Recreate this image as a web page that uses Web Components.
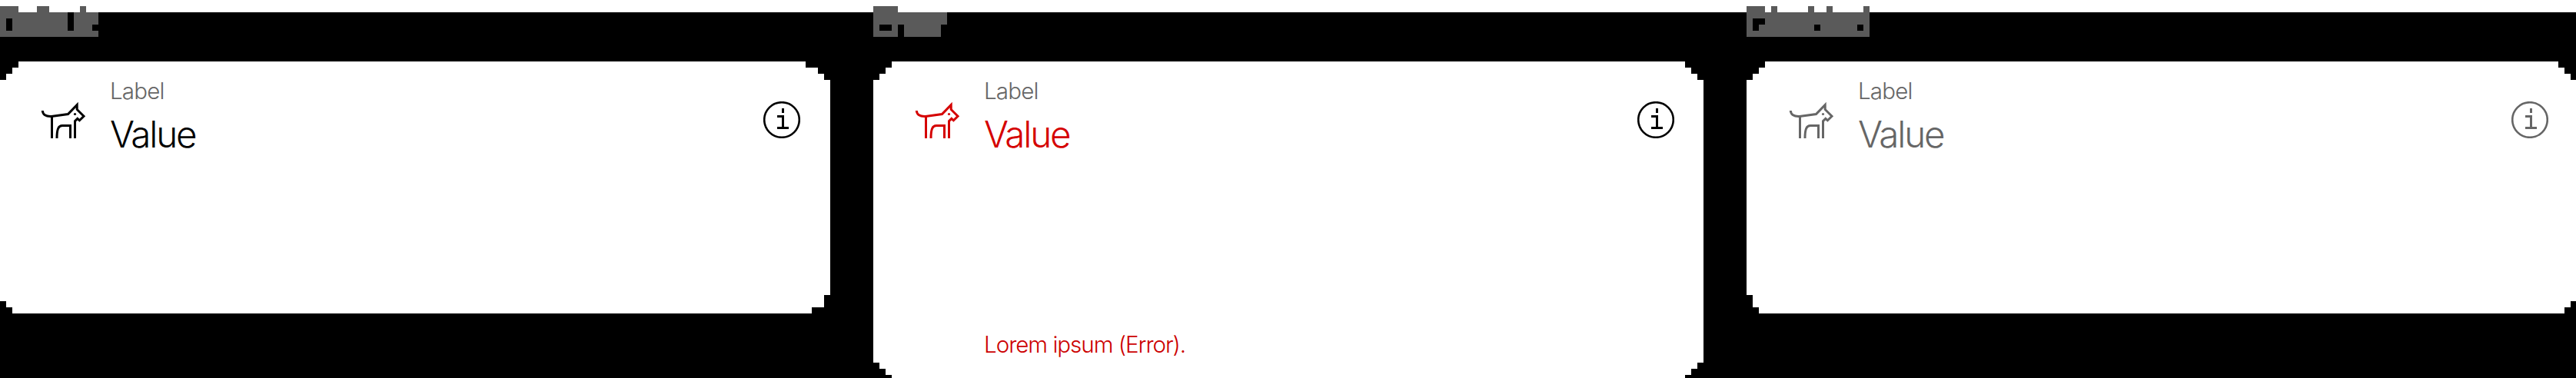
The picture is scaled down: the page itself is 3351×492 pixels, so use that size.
<!DOCTYPE html>
<html lang="en"><head><meta charset="utf-8"><title>Text field states</title>
<style>
body{margin:0;background:#000;height:492px;overflow:hidden}
</style></head><body>
<field-board></field-board>
<script>
class DogIcon extends HTMLElement{constructor(){super();this.attachShadow({mode:'open'}).innerHTML=`
<style>:host{display:block;width:64px;height:64px}svg{display:block}</style>
<svg width="64" height="64" viewBox="48 124 64 64" fill="none" stroke="currentColor" stroke-width="3">
<path d="M55.3 144C55.6 149 59.5 152 67 151.5L88.5 148.5L100.2 136.5V142.5L109 151.3L103.4 156.8L100.8 154.4L97.5 157.7V180"/>
<path d="M67.5 151.5V180M74 180C74 168 76 163.5 81 163.5H91.5V180"/>
<circle cx="97.5" cy="148.5" r="1.6" fill="currentColor" stroke="none"/></svg>`}}
customElements.define('dog-icon',DogIcon);
class InfoIcon extends HTMLElement{constructor(){super();this.attachShadow({mode:'open'}).innerHTML=`
<style>:host{display:block;width:48px;height:48px}svg{display:block}</style>
<svg width="48" height="48" viewBox="0 0 48 48" fill="none" stroke="currentColor" stroke-width="3">
<circle cx="24" cy="24" r="22.8" stroke-width="2.6"/><path d="M25.5 9V15M18 19.5H25.5V36M18 34.5H33"/></svg>`}}
customElements.define('info-icon',InfoIcon);
class StateCaption extends HTMLElement{constructor(){super();this.attachShadow({mode:'open'}).innerHTML=`
<style>:host{display:block;height:80px}svg{display:block}</style>
<svg width="160" height="80" fill="#5a5a5a" shape-rendering="crispEdges"><path fill-rule="evenodd"/></svg>`}
connectedCallback(){this.shadowRoot.querySelector('path').setAttribute('d',this.getAttribute('shape'))}}
customElements.define('state-caption',StateCaption);
class TextField extends HTMLElement{constructor(){super();this.attachShadow({mode:'open'}).innerHTML=`
<style>
:host{display:grid;grid-template-columns:64px 1fr 48px;box-sizing:border-box;height:328px;padding:0 39px 0 48px;background:#fff;color:#000;font-family:Inter,"Liberation Sans",sans-serif;font-weight:300}
:host([state=error]){height:412px;padding:0 38px 0 49px;color:#d50000}
:host([state=error]) info-icon{color:#000}
:host([state=disabled]){padding:0 36px 0 50px;color:#666}
dog-icon{margin-top:44px}
info-icon{margin-top:52px}
.copy{display:flex;flex-direction:column;padding-left:31px;align-items:flex-start;white-space:nowrap}
.label{color:#666;font-size:29.5px;line-height:36px;margin-top:20px;letter-spacing:-.8px}
.value{font-size:47.5px;line-height:56px;margin-top:11px;letter-spacing:-2.2px}
.help{font-size:29.5px;line-height:36px;margin-top:227px;letter-spacing:-1px;color:#cc0000}
</style>
<dog-icon></dog-icon><div class="copy"><span class="label"><slot name="label"></slot></span><span class="value"><slot></slot></span><span class="help"><slot name="help"></slot></span></div><info-icon></info-icon>`}
connectedCallback(){this.style.clipPath='polygon('+this.getAttribute('edge')+')'}}
customElements.define('text-field',TextField);
class FieldBoard extends HTMLElement{constructor(){super();this.attachShadow({mode:'open'}).innerHTML=`
<style>:host{display:grid;grid-template-columns:1080px 1080px 1079px;gap:0 56px;height:492px;background:linear-gradient(#fff 16px,#000 16px)}</style>
<section><state-caption shape="M0 8H24V16H48V8H64V16H104V8H112V16H128V48H0ZM8 24V40H16V24ZM88 16V40H96V16ZM120 32V40H128V32Z"></state-caption>
<text-field edge="24px 0,1048px 0,1048px 8px,1064px 8px,1064px 16px,1072px 16px,1072px 24px,1080px 24px,1080px 304px,1072px 304px,1072px 320px,1056px 320px,1056px 328px,16px 328px,16px 320px,8px 320px,8px 312px,0 312px,0 24px,8px 24px,8px 16px,16px 16px,16px 8px,24px 8px"><span slot="label">Label</span>Value</text-field></section>
<section><state-caption shape="M0 8H32V16H96V32H88V48H0ZM8 32V40H24V32ZM32 32V48H40V32Z"></state-caption>
<text-field state="error" edge="24px 0,1056px 0,1056px 8px,1064px 8px,1064px 16px,1072px 16px,1072px 24px,1080px 24px,1080px 392px,1072px 392px,1072px 400px,1064px 400px,1064px 408px,1056px 408px,1056px 412px,24px 412px,24px 408px,16px 408px,16px 400px,8px 400px,8px 392px,0 392px,0 24px,8px 24px,8px 16px,16px 16px,16px 8px,24px 8px"><span slot="label">Label</span>Value<span slot="help">Lorem ipsum (Error).</span></text-field></section>
<section><state-caption shape="M0 8H24V16H32V8H40V16H80V8H88V16H104V8H112V16H152V8H160V48H0ZM8 24V40H16V32H24V24ZM88 32V40H96V32ZM144 32V40H152V32Z"></state-caption>
<text-field state="disabled" edge="24px 0,1056px 0,1056px 8px,1064px 8px,1064px 16px,1072px 16px,1072px 24px,1079px 24px,1079px 312px,1072px 312px,1072px 320px,1064px 320px,1064px 328px,16px 328px,16px 320px,8px 320px,8px 304px,0 304px,0 24px,8px 24px,8px 16px,16px 16px,16px 8px,24px 8px"><span slot="label">Label</span>Value</text-field></section>`}}
customElements.define('field-board',FieldBoard);
</script></body></html>
